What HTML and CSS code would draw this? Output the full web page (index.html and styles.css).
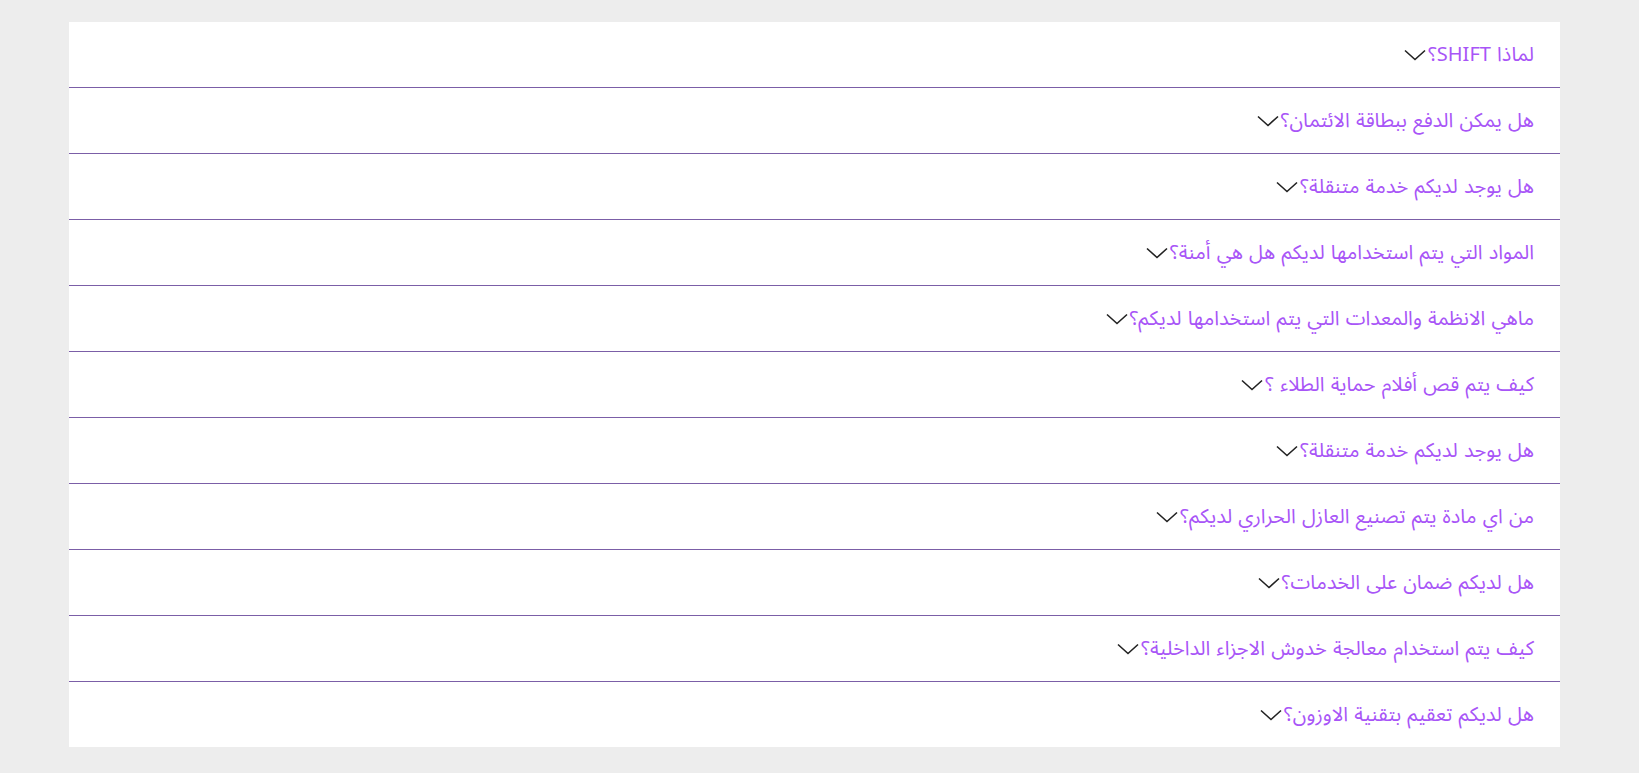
FILE: index.html
```html
<!DOCTYPE html>
<html lang="ar" dir="rtl">
<head>
<meta charset="utf-8">
<title>الأسئلة الشائعة</title>
<link rel="stylesheet" href="styles.css">
</head>
<body>
<div class="faq">
  <div class="item"><span class="q">لماذا SHIFT؟</span><svg class="chev" viewBox="0 0 22 12"><path d="M1 1.5 L11 10.5 L21 1.5"/></svg></div>
  <div class="item"><span class="q">هل يمكن الدفع ببطاقة الائتمان؟</span><svg class="chev" viewBox="0 0 22 12"><path d="M1 1.5 L11 10.5 L21 1.5"/></svg></div>
  <div class="item"><span class="q">هل يوجد لديكم خدمة متنقلة؟</span><svg class="chev" viewBox="0 0 22 12"><path d="M1 1.5 L11 10.5 L21 1.5"/></svg></div>
  <div class="item"><span class="q">المواد التي يتم استخدامها لديكم هل هي أمنة؟</span><svg class="chev" viewBox="0 0 22 12"><path d="M1 1.5 L11 10.5 L21 1.5"/></svg></div>
  <div class="item"><span class="q">ماهي الانظمة والمعدات التي يتم استخدامها لديكم؟</span><svg class="chev" viewBox="0 0 22 12"><path d="M1 1.5 L11 10.5 L21 1.5"/></svg></div>
  <div class="item"><span class="q">كيف يتم قص أفلام حماية الطلاء ؟</span><svg class="chev" viewBox="0 0 22 12"><path d="M1 1.5 L11 10.5 L21 1.5"/></svg></div>
  <div class="item"><span class="q">هل يوجد لديكم خدمة متنقلة؟</span><svg class="chev" viewBox="0 0 22 12"><path d="M1 1.5 L11 10.5 L21 1.5"/></svg></div>
  <div class="item"><span class="q">من اي مادة يتم تصنيع العازل الحراري لديكم؟</span><svg class="chev" viewBox="0 0 22 12"><path d="M1 1.5 L11 10.5 L21 1.5"/></svg></div>
  <div class="item"><span class="q">هل لديكم ضمان على الخدمات؟</span><svg class="chev" viewBox="0 0 22 12"><path d="M1 1.5 L11 10.5 L21 1.5"/></svg></div>
  <div class="item"><span class="q">كيف يتم استخدام معالجة خدوش الاجزاء الداخلية؟</span><svg class="chev" viewBox="0 0 22 12"><path d="M1 1.5 L11 10.5 L21 1.5"/></svg></div>
  <div class="item last"><span class="q">هل لديكم تعقيم بتقنية الاوزون؟</span><svg class="chev" viewBox="0 0 22 12"><path d="M1 1.5 L11 10.5 L21 1.5"/></svg></div>
</div>
</body>
</html>
```
FILE: styles.css
```css
html, body {
  margin: 0;
  padding: 0;
  background: #ededed;
}
body {
  padding: 22px 79px 26px 69px;
  font-family: "Noto Sans Arabic", "DejaVu Sans", sans-serif;
}
.faq {
  background: #ffffff;
  display: flex;
  flex-direction: column;
}
.item {
  height: 65px;
  display: flex;
  align-items: center;
  gap: 2px;
  padding: 0 26px;
  border-bottom: 1px solid #7b5ea7;
  box-sizing: content-box;
}
.item.last {
  border-bottom: none;
}
.q {
  color: #a855f7;
  font-size: 20px;
  line-height: 1;
  word-spacing: 1px;
}
.chev {
  width: 22px;
  height: 12px;
  fill: none;
  stroke: #222222;
  stroke-width: 1.6;
}
```
